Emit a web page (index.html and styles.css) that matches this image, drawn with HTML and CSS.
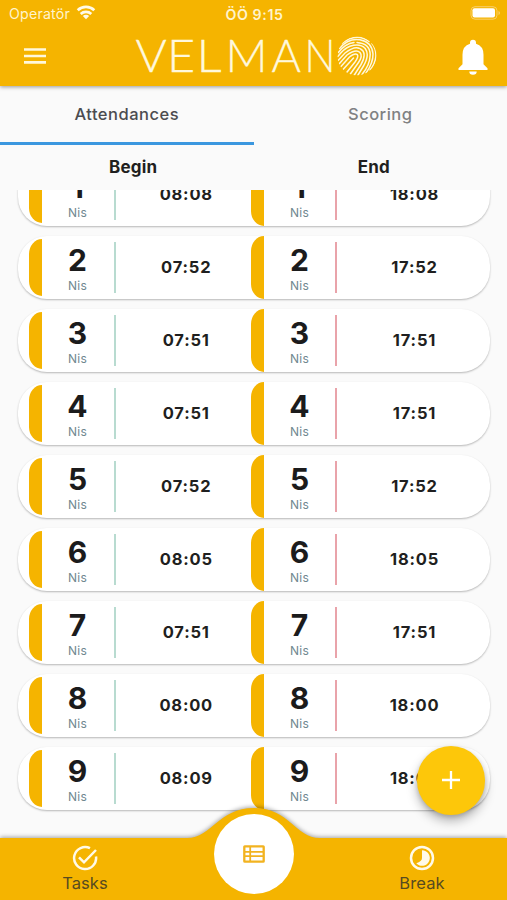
FILE: index.html
```html
<!DOCTYPE html>
<html lang="en">
<head>
<meta charset="utf-8">
<title>Velmano</title>
<link rel="stylesheet" href="styles.css">
</head>
<body>
<div class="app">
  <header class="header">
    <div class="status">
      <div class="carrier"><span>Operatör</span>
        <svg width="20" height="15" viewBox="0 0 20 15"><g fill="none" stroke="#fffae8" stroke-width="2.700"><path d="M1.700 5.300C6.300 .8 13.700 .8 18.300 5.300"/><path d="M4.700 8.900C7.700 6.100 12.300 6.100 15.300 8.900"/></g><path d="M6.800 11c1.900-1.700 4.500-1.700 6.400 0L10 14.200z" fill="#fffae8"/></svg>
      </div>
      <div class="clock">ÖÖ 9:15</div>
      <svg class="battery" width="31" height="14" viewBox="0 0 31 14"><rect x="1" y=".7" width="26" height="12.500" rx="4" fill="none" stroke="#f9cf69"/><rect x="2.500" y="2.300" width="22.500" height="9.200" rx="2" fill="#fff"/><path d="M28.500 5v4q1.500-.5 1.500-2t-1.500-2z" fill="#f9cf69"/></svg>
    </div>
    <div class="toolbar">
      <svg width="24" height="18" viewBox="0 0 24 18"><path d="M1 2.500h22M1 9h22M1 15.300h22" stroke="#fff8dc" stroke-width="2.700"/></svg>
      <svg class="logo" width="244" height="56" viewBox="0 -6 244 56">
        <g class="wordmark"><text transform="translate(1.500 38) scale(1.060 1)">V</text><text transform="translate(33 38) scale(1.080 1)">E</text><text transform="translate(62.500 38) scale(1.100 1)">L</text><text transform="translate(91.500 38) scale(1.030 1)">M</text><text transform="translate(137.500 38)">A</text><text transform="translate(170.500 38) scale(.91 1)">N</text></g>
        <clipPath id="disc"><circle cx="223" cy="22" r="19.500"/></clipPath>
        <g clip-path="url(#disc)" fill="none" stroke="#fff8dc" stroke-width="1.500" stroke-linecap="round">
          <path d="M208 9.500Q222-2 235 7.500M238 9.500Q242.500 15 241.800 23Q241 30 236 36"/>
          <path d="M205.500 14.500Q214 4 226 5.800Q238 8 239 20Q239.200 29 232 39"/>
          <path d="M204.300 18.500Q211 9.500 220 8.400M223 8.400Q236 9.500 236.200 20.500Q236 31 228 40.500"/>
          <path d="M203.800 22.500Q210 14.500 216 12.300Q226 9 231.200 14.500Q236 21 229.500 32L224 41"/>
          <path d="M204 26.500L211 19Q223 9.500 229 17Q232 22 227 30.500L220 41.500"/>
          <path d="M205 30L213 21Q222 14.500 226 18.500Q229 22 224.500 28.500L216 40.500"/>
          <path d="M206.500 33L215.500 23Q221 18.500 223.300 20.600Q225 22.500 221 28L212.500 38.800"/>
          <path d="M209 35.500L219.500 24"/>
        </g>
      </svg>
      <svg class="bell" width="30" height="36" viewBox="0 0 30 36"><path d="M15 .8a3 3 0 0 1 3 3v1q7.500 2.200 7.500 11v9.500l4 4V31H.5v-1.700l4-4v-9.500q0-8.800 7.500-11v-1a3 3 0 0 1 3-3zM11.300 32.500h7.400a3.700 3.200 0 0 1-7.400 0z" fill="#fff"/></svg>
    </div>
  </header>
  <nav class="tabs"><div class="tab active">Attendances</div><div class="tab">Scoring</div></nav>
  <div class="heads"><span>Begin</span><span>End</span></div>
  <main class="list" id="list"></main>
  <button class="fab" aria-label="Add"><svg width="20" height="20" viewBox="0 0 20 20"><path d="M10 1v18M1 10h18" stroke="#fff" stroke-width="2.300"/></svg></button>
  <footer class="bottom">
    <svg class="shape" width="507" height="101" viewBox="0 0 507 101"><path d="M0 39H187C212 39 218 9 254 9S295 39 320 39H507V101H0z" fill="#f5b400"/></svg>
    <div class="nav-items">
      <div class="nav-item">
        <svg width="26" height="26" viewBox="0 0 26 26" fill="none" stroke="#fffae8" stroke-width="2.500"><path d="M24 11.500A11 11 0 1 1 18 3.200"/><path d="M7 12.300l5 5L24 5"/></svg>
        <span>Tasks</span>
      </div>
      <div class="center"><svg width="22" height="18" viewBox="0 0 22 18"><rect x="1.300" y="1.300" width="19.400" height="15.400" rx=".5" fill="none" stroke="#f2b320" stroke-width="2.300"/><path d="M7.200 2v14M2 6.900h18M2 11.100h18" stroke="#f2b320" stroke-width="1.800"/></svg></div>
      <div class="nav-item">
        <svg width="26" height="26" viewBox="0 0 26 26"><circle cx="13" cy="13" r="11" fill="none" stroke="#fffae8" stroke-width="2.500"/><path d="M13 5.200A7.800 7.800 0 1 1 7.300 18.300Q13 16.500 13 13z" fill="#fffae8"/></svg>
        <span>Break</span>
      </div>
    </div>
  </footer>
</div>
<script src="app.js"></script>
</body>
</html>
```
FILE: styles.css
```css
* { box-sizing: border-box; }
body { margin: 0; font-family: Inter, sans-serif; }
svg { display: block; }
.app { position: relative; width: 507px; height: 900px; overflow: hidden; background: #fafafa; display: flex; flex-direction: column; }
.header { height: 86px; flex: none; background: #f5b400; box-shadow: 0 1px 4px rgba(0,0,0,.4); }
.status { height: 28px; padding: 0 6px 0 9px; display: grid; grid-template-columns: 1fr auto 1fr; align-items: center; color: #fff3cc; font-size: 14.200px; }
.carrier { display: flex; align-items: flex-start; gap: 6px; letter-spacing: .2px; line-height: 28px; height: 28px; }
.carrier svg { margin-top: 5px; }
.clock { font-weight: 600; letter-spacing: .6px; margin: 0 1px 0 0; }
.battery { justify-self: end; margin-top: -2px; }
.toolbar { height: 56px; padding: 0 19px 0 23px; display: flex; align-items: center; justify-content: space-between; }
.logo { margin-left: 6px; overflow: visible; }
.wordmark { font-family: Lato, sans-serif; font-weight: 300; font-size: 45px; fill: #fff8dc; stroke: #fff8dc; stroke-width: .3px; }
.bell { margin-top: 2px; }
.tabs { height: 59px; flex: none; display: flex; }
.tab { flex: 1; text-align: center; line-height: 57px; font-size: 16.500px; font-weight: 500; letter-spacing: .5px; color: #808183; }
.tab.active { color: #4b4c50; border-bottom: 3px solid #3b97df; }
.heads { height: 45px; flex: none; display: flex; padding: 0 13px; font-size: 17px; line-height: 45px; font-weight: 650; color: #1f1f20; letter-spacing: .2px; }
.heads span { flex: 1; text-align: center; }
.list { height: 710px; overflow: hidden; padding: 0 17px 0 18px; }
.rows { margin-top: -27.500px; display: flex; flex-direction: column; gap: 10px; }
.card { height: 63px; flex: none; display: grid; grid-template-columns: 233px 1fr; background: #fff; border-radius: 29px; box-shadow: 0 1px 2px rgba(0,0,0,.27); }
.half { display: flex; align-items: center; }
.bar { width: 13px; height: 57px; background: #f5b400; border-radius: 13px 0 0 13px / 15px 0 0 15px; margin-left: 10.500px; flex: none; }
.end .bar { height: 63px; margin-left: 0; }
.day { width: 72px; text-align: center; padding-top: 4px; }
.num { font-size: 30px; line-height: 32px; font-weight: 650; color: #1b1b1c; }
.month { font-size: 12px; line-height: 16px; margin-top: 2px; color: #708890; letter-spacing: .3px; }
.rule { width: 2px; height: 51px; background: #b8dbd0; }
.end .rule { background: #e9a3aa; }
.time { flex: 1; text-align: center; font-size: 16.500px; font-weight: 650; letter-spacing: .8px; color: #1f1f20; padding: 0 0 1px 6px; }
.end .day { width: 71px; }
.end .time { padding-left: 2px; }
.fab { position: absolute; left: 416.500px; top: 746px; width: 68.500px; height: 68.500px; padding: 0; border: 0; border-radius: 50%; background: #fdc70a; display: grid; place-items: center; box-shadow: 0 6px 11px rgba(0,0,0,.28), 0 2px 4px rgba(0,0,0,.15); }
.bottom { position: absolute; left: 0; top: 799px; width: 507px; height: 101px; }
.shape { position: absolute; left: 0; top: 0; filter: drop-shadow(0 -1px 2px rgba(0,0,0,.35)); }
.nav-items { position: relative; display: grid; grid-template-columns: 170px 1fr 170px; height: 101px; }
.nav-item { padding-top: 46px; display: flex; flex-direction: column; align-items: center; gap: 1px; font-size: 16.500px; line-height: 22px; letter-spacing: .1px; color: #574b20; }
.center { width: 80px; height: 80px; border-radius: 50%; background: #fff; margin: 15px auto 0; display: grid; place-items: center; }
```
FILE: app.js
```js
const times = ["08:08", "07:52", "07:51", "07:51", "07:52", "08:05", "07:51", "08:00", "08:09"];
const ends = ["18:08", "17:52", "17:51", "17:51", "17:52", "18:05", "17:51", "18:00", "18:09"];
const half = (kind, day, time) => `<div class="half ${kind}"><div class="bar"></div><div class="day"><div class="num">${day}</div><div class="month">Nis</div></div><div class="rule"></div><div class="time">${time}</div></div>`;
document.getElementById("list").innerHTML = `<div class="rows">${times.map((t, i) => `<div class="card">${half("begin", i + 1, t)}${half("end", i + 1, ends[i])}</div>`).join("")}</div>`;
```
